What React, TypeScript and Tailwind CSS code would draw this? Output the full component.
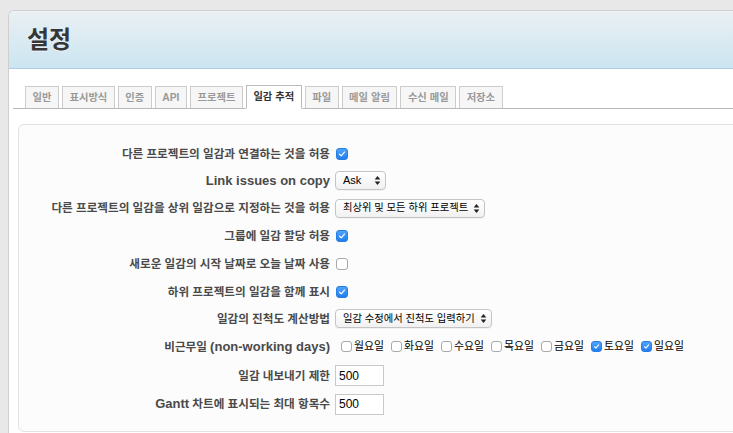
import React from "react";

const FONT = { fontFamily: '"Liberation Sans", "Noto Sans CJK KR", sans-serif' };

function Check({ checked, size = 12 }: { checked: boolean; size?: number }) {
  return checked ? (
    <span
      className="inline-flex items-center justify-center rounded-[3px] bg-gradient-to-b from-[#4fa3ff] to-[#1f7ef0] border border-[#2a7de0]"
      style={{ width: size, height: size }}
    >
      <svg width={size - 4} height={size - 4} viewBox="0 0 10 10">
        <path d="M2 5.3 L4.1 7.4 L8 2.6" fill="none" stroke="#fff" strokeWidth="1.5" strokeLinecap="round" strokeLinejoin="round" />
      </svg>
    </span>
  ) : (
    <span
      className="inline-block rounded-[3px] bg-white border border-[#a9a9a9]"
      style={{ width: size, height: size }}
    />
  );
}

function Select({ w, children }: { w: number; children: React.ReactNode }) {
  return (
    <div
      className="h-[19px] rounded-[4px] border border-[#c4c4c4] bg-gradient-to-b from-white to-[#f1f1f1] flex items-center justify-between pl-[7px] pr-[4px] text-[10.3px] text-black shadow-[0_1px_0_rgba(0,0,0,0.04)]"
      style={{ width: w }}
    >
      <span className="whitespace-nowrap">{children}</span>
      <svg width="7" height="11" viewBox="0 0 7 11">
        <path d="M3.5 1 L6.3 4.5 L0.7 4.5 Z" fill="#222" />
        <path d="M3.5 10 L6.3 6.5 L0.7 6.5 Z" fill="#222" />
      </svg>
    </div>
  );
}

function Row({ h, label, children }: { h: number; label: React.ReactNode; children: React.ReactNode }) {
  return (
    <div className="flex items-center" style={{ height: h }}>
      <div className="w-[311px] text-right font-bold text-[#4a4a4a] text-[11.6px] whitespace-nowrap">{label}</div>
      <div className="ml-[5px] flex items-center">{children}</div>
    </div>
  );
}

const tabs = ["일반", "표시방식", "인증", "API", "프로젝트", "일감 추적", "파일", "메일 알림", "수신 메일", "저장소"];

export default function App() {
  const days = [
    ["월요일", false],
    ["화요일", false],
    ["수요일", false],
    ["목요일", false],
    ["금요일", false],
    ["토요일", true],
    ["일요일", true],
  ] as const;
  return (
    <div className="w-[733px] h-[433px] overflow-hidden bg-[#e8e8e8] pt-[10px] pl-[8px]" style={FONT}>
      <div className="w-[760px] h-[440px] bg-white rounded-tl-[6px] border-t border-l border-[#cfcfcf]">
        <div className="h-[58px] rounded-tl-[6px] bg-gradient-to-b from-[#eaf0f3] to-[#cbe5f1] border-b border-[#a9cfe0] flex items-center pl-[18px]">
          <h1 className="text-[24px] font-bold text-[#363636] leading-none [text-shadow:0_1px_0_rgba(255,255,255,0.6)]">설정</h1>
        </div>
        <div className="ml-[4px] mt-[18px] border-b border-[#bbbbbb] flex items-end pl-[12px] gap-[3px] h-[22px]">
          {tabs.map((t, i) =>
            i === 5 ? (
              <div
                key={t}
                className="h-[24px] -mb-px px-[6.5px] flex items-center bg-white border border-[#bbbbbb] border-b-white text-[10.3px] font-bold text-[#333] whitespace-nowrap"
              >
                {t}
              </div>
            ) : (
              <div
                key={t}
                className="h-[22px] px-[6.5px] flex items-center bg-[#f6f6f6] border border-[#cccccc] border-b-0 text-[10.3px] font-bold text-[#999] whitespace-nowrap"
              >
                {t}
              </div>
            )
          )}
        </div>
        <div className="ml-[9px] mt-[15px] w-[740px] h-[308px] rounded-[6px] border border-[#e2e2e2] bg-[#fcfcfc] pt-[15px]">
          <Row h={27} label="다른 프로젝트의 일감과 연결하는 것을 허용">
            <span className="ml-[1px] flex"><Check checked /></span>
          </Row>
          <Row h={27} label={<span className="text-[13px]">Link issues on copy</span>}>
            <Select w={51}><span className="text-[11px]">Ask</span></Select>
          </Row>
          <Row h={28} label="다른 프로젝트의 일감을 상위 일감으로 지정하는 것을 허용">
            <Select w={150}>최상위 및 모든 하위 프로젝트</Select>
          </Row>
          <Row h={28} label="그룹에 일감 할당 허용">
            <span className="ml-[1px] flex"><Check checked /></span>
          </Row>
          <Row h={28} label="새로운 일감의 시작 날짜로 오늘 날짜 사용">
            <span className="ml-[1px] flex"><Check checked={false} /></span>
          </Row>
          <Row h={27} label="하위 프로젝트의 일감을 함께 표시">
            <span className="ml-[1px] flex"><Check checked /></span>
          </Row>
          <Row h={27} label="일감의 진척도 계산방법">
            <Select w={157}>일감 수정에서 진척도 입력하기</Select>
          </Row>
          <Row h={29} label={<>비근무일 <span className="text-[13px]">(non-working days)</span></>}>
            <div className="ml-[6px] flex items-center">
              {days.map(([d, c]) => (
                <div key={d} className="w-[50px] flex items-center">
                  <Check checked={c} size={11} />
                  <span className="ml-[2px] text-[10.9px] text-black">{d}</span>
                </div>
              ))}
            </div>
          </Row>
          <Row h={29} label="일감 내보내기 제한">
            <div className="w-[49px] h-[21px] border border-[#c9c9c9] bg-white flex items-center pl-[3px] text-[12px] text-black">500</div>
          </Row>
          <Row h={28} label={<><span className="text-[13px]">Gantt</span> 차트에 표시되는 최대 항목수</>}>
            <div className="w-[49px] h-[21px] border border-[#c9c9c9] bg-white flex items-center pl-[3px] text-[12px] text-black">500</div>
          </Row>
        </div>
      </div>
    </div>
  );
}
